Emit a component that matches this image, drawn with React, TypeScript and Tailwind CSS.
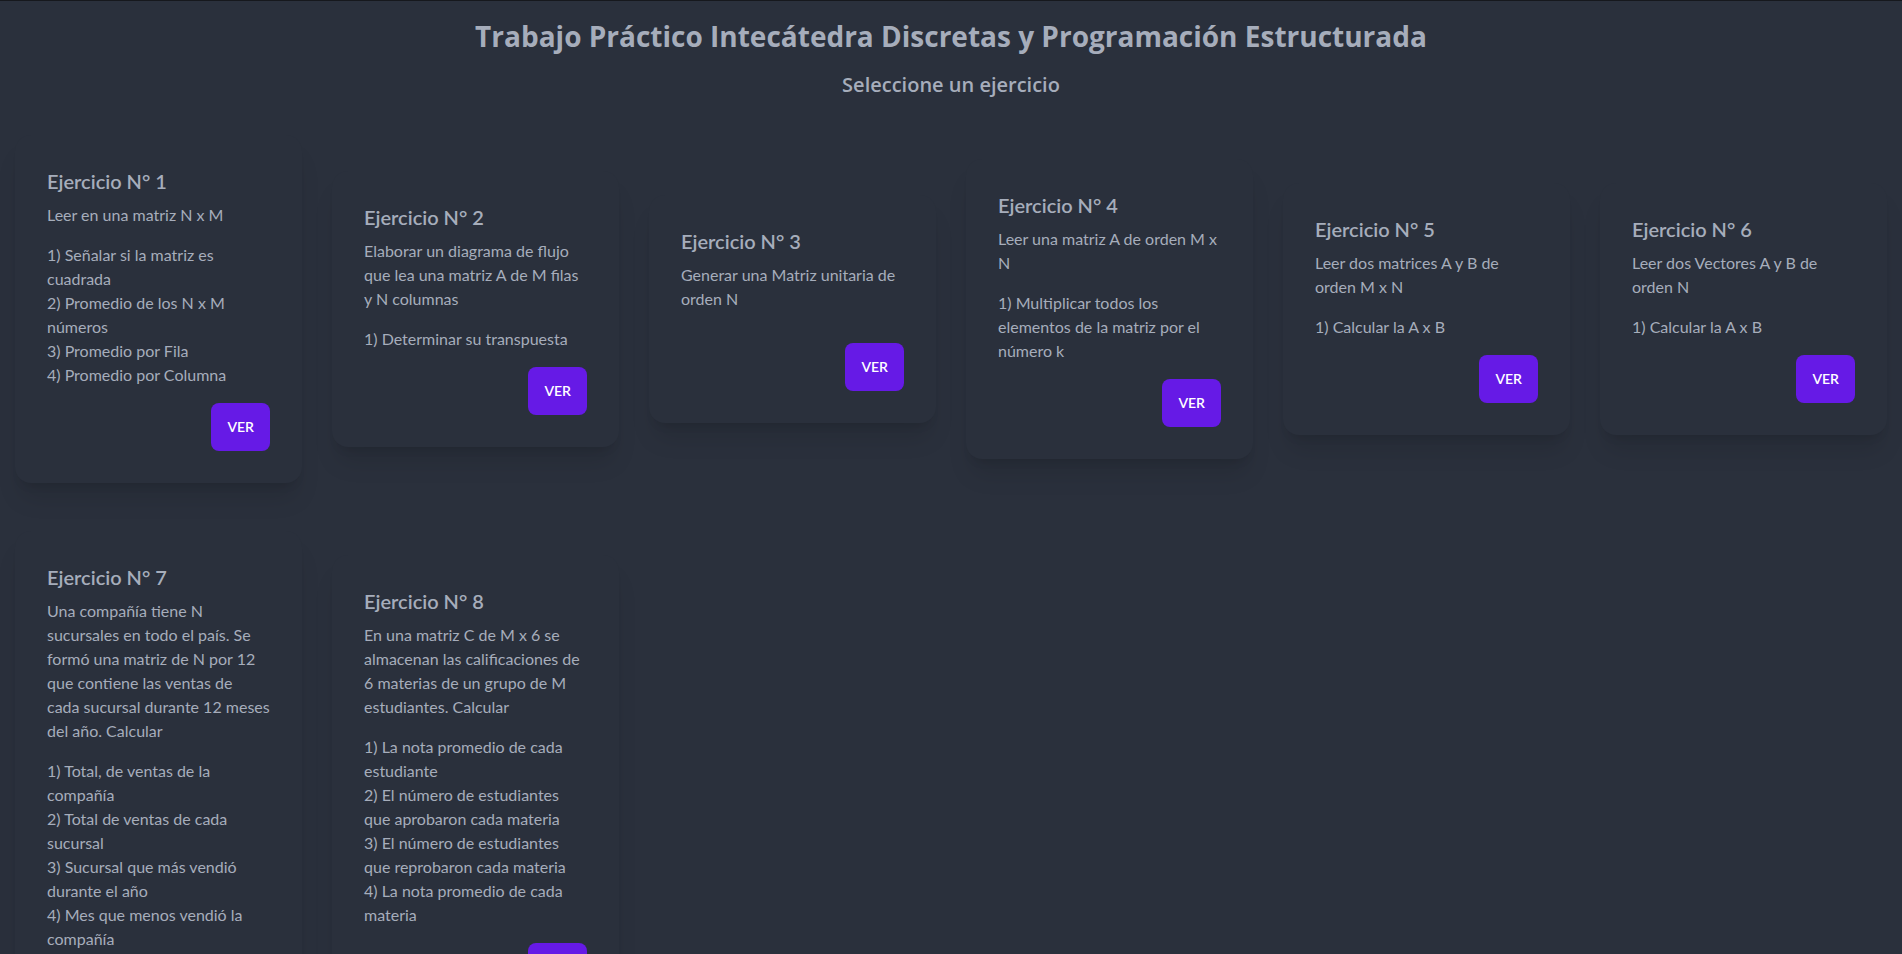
import type { ReactNode } from 'react';

type Ejercicio = { n: number; desc: ReactNode; items: string[] };

const EJERCICIOS: Ejercicio[] = [
  {
    n: 1,
    desc: 'Leer en una matriz N x M',
    items: [
      '1) Señalar si la matriz es cuadrada',
      '2) Promedio de los N x M números',
      '3) Promedio por Fila',
      '4) Promedio por Columna',
    ],
  },
  {
    n: 2,
    desc: 'Elaborar un diagrama de flujo que lea una matriz A de M filas y N columnas',
    items: ['1) Determinar su transpuesta'],
  },
  { n: 3, desc: 'Generar una Matriz unitaria de orden N', items: [] },
  {
    n: 4,
    desc: 'Leer una matriz A de orden M x N',
    items: ['1) Multiplicar todos los elementos de la matriz por el número k'],
  },
  { n: 5, desc: 'Leer dos matrices A y B de orden M x N', items: ['1) Calcular la A x B'] },
  { n: 6, desc: 'Leer dos Vectores A y B de orden N', items: ['1) Calcular la A x B'] },
  {
    n: 7,
    desc: (
      <>
        Una compañía tiene N sucursales en todo el país. Se formó una matriz de N por 12 que
        contiene las ventas de{' '}
        <span className="whitespace-nowrap">cada sucursal durante 12 meses</span> del año. Calcular
      </>
    ),
    items: [
      '1) Total, de ventas de la compañía',
      '2) Total de ventas de cada sucursal',
      '3) Sucursal que más vendió durante el año',
      '4) Mes que menos vendió la compañía',
    ],
  },
  {
    n: 8,
    desc: 'En una matriz C de M x 6 se almacenan las calificaciones de 6 materias de un grupo de M estudiantes. Calcular',
    items: [
      '1) La nota promedio de cada estudiante',
      '2) El número de estudiantes que aprobaron cada materia',
      '3) El número de estudiantes que reprobaron cada materia',
      '4) La nota promedio de cada materia',
    ],
  },
];

export default function App() {
  return (
    <div className="min-h-screen border-t border-[#16181d] bg-[#2a303c] font-['Lato',sans-serif] text-[#a6adbb]">
      <header className="pt-[17px] text-center font-['Open_Sans',sans-serif]">
        <h1 className="text-[28px] leading-9 font-bold">
          Trabajo Práctico Intecátedra Discretas y Programación Estructurada
        </h1>
        <p className="mt-[17px] text-xl leading-7 font-semibold">Seleccione un ejercicio</p>
      </header>

      {/* Ejercicios */}
      <main className="mt-9 grid grid-cols-6 items-center gap-x-[30px] gap-y-12 px-[15px]">
        {EJERCICIOS.map((e) => (
          <div key={e.n} className="rounded-2xl bg-[#2a303c] shadow-xl">
            <div className="flex flex-col gap-2 p-8">
              <h2 className="text-xl leading-7 font-semibold">Ejercicio N° {e.n}</h2>
              <p className="mb-2 text-base leading-6">{e.desc}</p>
              <p className="mb-2 text-base leading-6">
                {e.items.map((it, i) => (
                  <span key={i}>
                    {it}
                    {i < e.items.length - 1 && <br />}
                  </span>
                ))}
              </p>
              <div className="flex justify-end">
                <button className="h-12 rounded-lg bg-[#661ae6] px-4 text-sm font-semibold text-white uppercase">
                  Ver
                </button>
              </div>
            </div>
          </div>
        ))}
      </main>
    </div>
  );
}
